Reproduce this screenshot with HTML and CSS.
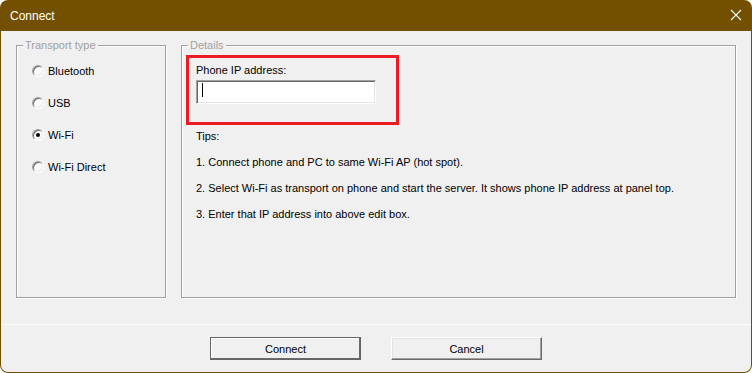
FILE: index.html
```html
<!DOCTYPE html>
<html lang="en">
<head>
    <meta charset="UTF-8">
    <meta name="viewport" content="width=device-width, initial-scale=1.0">
    <title>Connect</title>
    <link rel="stylesheet" href="styles.css">
</head>
<body>
    <div class="window">
        <div class="titlebar">
            <span class="title">Connect</span>
            <svg class="close" width="12" height="12" viewBox="0 0 12 12">
                <path d="M1 1 L11 11 M11 1 L1 11" stroke="#fff" stroke-width="1.1" fill="none"/>
            </svg>
        </div>
        <div class="client">
            <div class="groups">
                <fieldset class="group">
                    <legend>Transport type</legend>
                    <div class="options">
                        <div class="option"><span class="radio"></span>Bluetooth</div>
                        <div class="option"><span class="radio"></span>USB</div>
                        <div class="option"><span class="radio checked"></span>Wi-Fi</div>
                        <div class="option"><span class="radio"></span>Wi-Fi Direct</div>
                    </div>
                </fieldset>
                <fieldset class="group">
                    <legend>Details</legend>
                    <div class="highlight">
                        <div class="label">Phone IP address:</div>
                        <div class="edit"><span class="caret"></span></div>
                    </div>
                    <div class="tips">
                        <p>Tips:</p>
                        <p>1. Connect phone and PC to same Wi-Fi AP (hot spot).</p>
                        <p>2. Select Wi-Fi as transport on phone and start the server. It shows phone IP address at panel top.</p>
                        <p>3. Enter that IP address into above edit box.</p>
                    </div>
                </fieldset>
            </div>
            <div class="separator"></div>
            <div class="buttons">
                <button class="btn default">Connect</button>
                <button class="btn">Cancel</button>
            </div>
        </div>
    </div>
</body>
</html>
```

FILE: styles.css
```css
body {
    margin: 0;
    padding: 0;
    font-family: "Liberation Sans", Arial, sans-serif;
    font-size: 11px;
    color: #000;
    background: #fff;
}

.window {
    width: 752px;
    height: 373px;
    box-sizing: border-box;
    padding: 0 1px 1px 1px;
    background: #735000;
    border-radius: 8px;
    display: flex;
    flex-direction: column;
    overflow: hidden;
}

.titlebar {
    height: 31px;
    flex: none;
    display: flex;
    align-items: center;
    justify-content: space-between;
    padding: 0 9px 0 9px;
    color: #fff;
    font-size: 12px;
}

.close {
    display: block;
    margin-top: -1px;
}

.client {
    flex: 1;
    background: #f0f0f0;
    border-radius: 0 0 7px 7px;
    display: flex;
    flex-direction: column;
}

.groups {
    display: grid;
    grid-template-columns: 150px 555px;
    gap: 15px;
    padding: 8px 15px 0 15px;
}

.group {
    margin: 0;
    padding: 0;
    height: 259px;
    box-sizing: border-box;
    border: 1px solid #a0a0a0;
    box-shadow: 1px 1px 0 #fff, inset 1px 1px 0 #fff;
    min-width: 0;
}

legend {
    color: #a0a0a0;
    padding: 0 2px;
    margin-left: 6px;
    line-height: 13px;
    background: #f0f0f0;
}

.options {
    display: flex;
    flex-direction: column;
    gap: 16px;
    padding: 11px 0 0 15px;
}

.option {
    height: 16px;
    display: flex;
    align-items: center;
    gap: 4px;
}

.radio {
    width: 12px;
    height: 12px;
    box-sizing: border-box;
    border-radius: 50%;
    background: #fff;
    border: 1px solid;
    border-color: #a0a0a0 #fff #fff #a0a0a0;
    box-shadow: inset 1px 1px 0 #696969, inset -1px -1px 0 #e3e3e3;
    display: flex;
    align-items: center;
    justify-content: center;
}

.radio.checked::after {
    content: "";
    width: 4px;
    height: 4px;
    border-radius: 50%;
    background: #000;
}

.highlight {
    width: 213px;
    height: 70px;
    box-sizing: border-box;
    margin: 3px 0 0 4px;
    padding: 6px 0 0 7px;
    border: 3px solid #ed1c24;
}

.label {
    line-height: 13px;
}

.edit {
    width: 180px;
    height: 24px;
    box-sizing: border-box;
    margin-top: 3px;
    background: #fff;
    border: 1px solid;
    border-color: #a0a0a0 #fff #fff #a0a0a0;
    box-shadow: inset 1px 1px 0 #696969, inset -1px -1px 0 #e3e3e3;
    padding: 2px 0 0 5px;
}

.caret {
    display: block;
    width: 1px;
    height: 14px;
    background: #000;
}

.tips {
    padding: 5px 0 0 14px;
    display: flex;
    flex-direction: column;
    gap: 13px;
}

.tips p {
    margin: 0;
    line-height: 13px;
    white-space: nowrap;
}

.separator {
    margin-top: 26px;
    height: 1px;
    background: #fff;
}

.buttons {
    display: flex;
    justify-content: center;
    gap: 30px;
    margin-top: 12px;
}

.btn {
    width: 151px;
    height: 23px;
    box-sizing: border-box;
    font-family: "Liberation Sans", Arial, sans-serif;
    font-size: 11px;
    color: #000;
    background: #f0f0f0;
    border: 1px solid;
    border-color: #fff #696969 #696969 #fff;
    box-shadow: inset -1px -1px 0 #a0a0a0, inset 1px 1px 0 #e3e3e3;
    padding: 0;
}

.btn.default {
    border-color: #646464;
    box-shadow: inset -1px -1px 0 #696969, inset 1px 1px 0 #fff;
}
```
